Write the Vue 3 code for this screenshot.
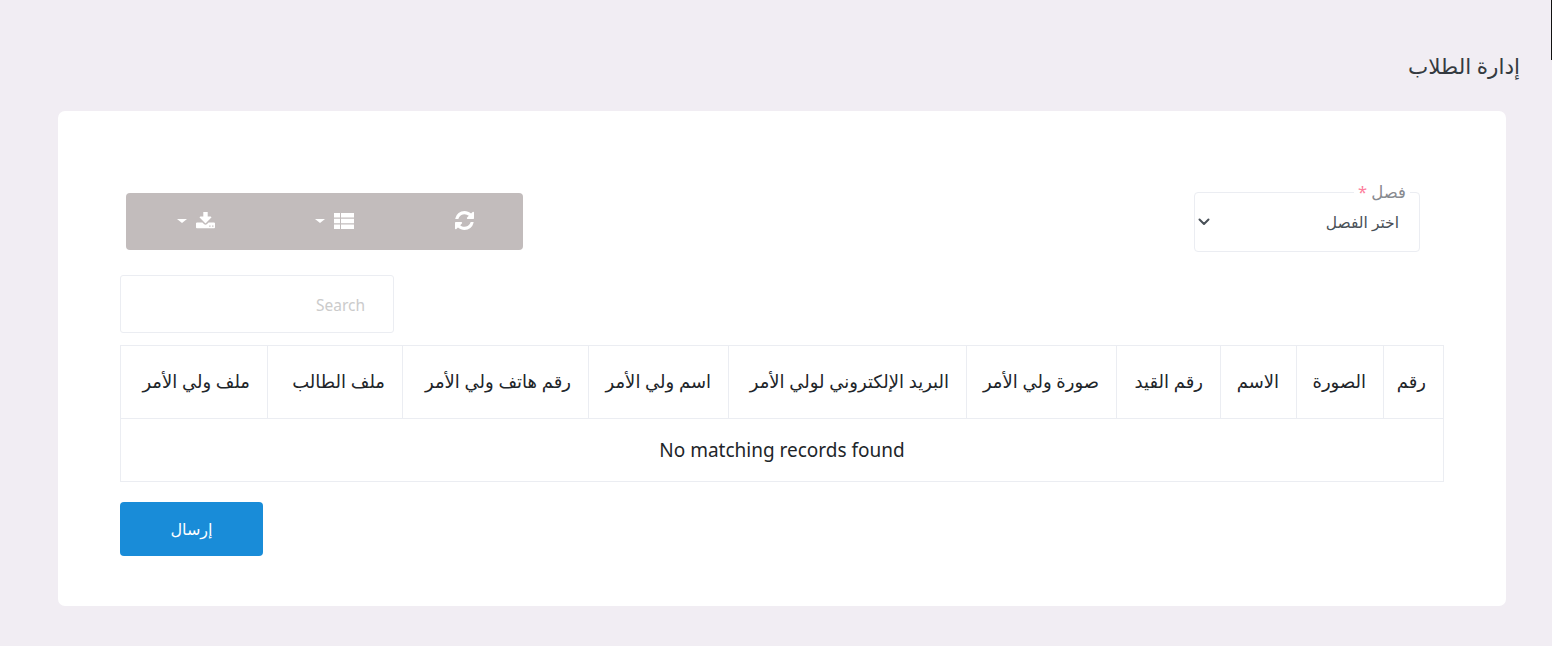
<script setup>
const columns = ['رقم', 'الصورة', 'الاسم', 'رقم القيد', 'صورة ولي الأمر', 'البريد الإلكتروني لولي الأمر', 'اسم ولي الأمر', 'رقم هاتف ولي الأمر', 'ملف الطالب', 'ملف ولي الأمر']
</script>

<template>
  <div class="page" dir="rtl">
    <i class="edge"></i>
    <h1 class="title">إدارة الطلاب</h1>
    <section class="card">
      <div class="filters">
        <div class="field">
          <span class="legend">فصل <em>*</em></span>
          <span class="value">اختر الفصل</span>
          <svg class="chevron" viewBox="0 0 12 8" width="12" height="8"><path d="M1.5 1.5 6 6l4.5-4.5" fill="none" stroke="#495057" stroke-width="2" stroke-linecap="round" stroke-linejoin="round"/></svg>
        </div>
        <div class="toolbar">
          <div class="tool tool-refresh">
            <svg viewBox="128 128 1536 1536" width="19" height="19"><path fill="#fff" d="M1639 1056q0 5-1 7-64 268-268 434.5t-478 166.5q-146 0-282.5-55t-243.5-157l-129 129q-19 19-45 19t-45-19-19-45v-448q0-26 19-45t45-19h448q26 0 45 19t19 45-19 45l-137 137q71 66 161 102t187 36q134 0 250-65t186-179q11-17 53-117 8-23 30-23h192q13 0 22.5 9.5t9.5 22.5zm25-800v448q0 26-19 45t-45 19h-448q-26 0-45-19t-19-45 19-45l138-138q-148-137-349-137-134 0-250 65t-186 179q-11 17-53 117-8 23-30 23h-199q-13 0-22.5-9.5t-9.5-22.5v-7q65-268 270-434.5t480-166.5q146 0 284 55.5t245 156.5l130-129q19-19 45-19t45 19 19 45z"/></svg>
          </div>
          <div class="tool tool-columns">
            <svg viewBox="0 0 20 16" width="20" height="16"><path fill="#fff" d="M0 0h6v4.6H0zM7 0h13v4.6H7zM0 5.7h6v4.6H0zM7 5.7h13v4.6H7zM0 11.4h6V16H0zM7 11.4h13V16H7z"/></svg>
            <i class="caret"></i>
          </div>
          <div class="tool tool-export">
            <svg viewBox="64 128 1664 1536" width="19" height="18"><path fill="#fff" d="M1344 1344q0-26-19-45t-45-19-45 19-19 45 19 45 45 19 45-19 19-45zm256 0q0-26-19-45t-45-19-45 19-19 45 19 45 45 19 45-19 19-45zm128-224v320q0 40-28 68t-68 28h-1472q-40 0-68-28t-28-68v-320q0-40 28-68t68-28h465l135 136q58 56 136 56t136-56l136-136h464q40 0 68 28t28 68zm-325-569q17 41-14 70l-448 448q-18 19-45 19t-45-19l-448-448q-31-29-14-70 17-39 59-39h256v-448q0-26 19-45t45-19h256q26 0 45 19t19 45v448h256q42 0 59 39z"/></svg>
            <i class="caret"></i>
          </div>
        </div>
      </div>

      <div class="search-row">
        <div class="search"><span>Search</span></div>
      </div>

      <table class="grid">
        <thead>
          <tr><th v-for="c in columns" :key="c">{{ c }}</th></tr>
        </thead>
        <tbody>
          <tr><td :colspan="columns.length">No matching records found</td></tr>
        </tbody>
      </table>

      <div class="actions">
        <button class="send" type="button">إرسال</button>
      </div>
    </section>
  </div>
</template>

<style>
html, body { margin: 0; background: #f1edf3; }
</style>

<style scoped>
.page {
  box-sizing: border-box;
  height: 646px;
  padding: 51px 32px 0 46px;
  background: #f1edf3;
  font-family: "Noto Sans", "DejaVu Sans", sans-serif;
  overflow: hidden;
}
.edge {
  position: absolute;
  top: 0;
  right: 0;
  width: 1px;
  height: 60px;
  background: #111;
}
.title {
  margin: 0;
  height: 60px;
  font-size: 21.5px;
  font-weight: 500;
  line-height: 30px;
  color: #343a40;
}
.card {
  box-sizing: border-box;
  margin-left: 12px;
  margin-right: 14px;
  height: 495px;
  padding: 81px 62px 0;
  background: #fff;
  border-radius: 7px;
}
.filters {
  display: flex;
  justify-content: space-between;
  align-items: flex-start;
  height: 83px;
}
.field {
  position: relative;
  box-sizing: border-box;
  display: flex;
  align-items: center;
  justify-content: space-between;
  width: 226px;
  height: 60px;
  margin-right: 24px;
  padding: 0 20px 0 3px;
  border: 1px solid #ebedf2;
  border-radius: 4px;
}
.legend {
  position: absolute;
  top: -11px;
  right: 9px;
  padding: 0 4px;
  background: #fff;
  font-size: 16.5px;
  line-height: 20px;
  color: #878a8f;
}
.legend em { font-style: normal; color: #fd7e9c; }
.value { font-size: 15.5px; color: #495057; }
.chevron { display: block; }
.toolbar {
  display: flex;
  width: 397px;
  height: 57px;
  margin: 1px 0 0 6px;
  background: #c2bcbc;
  border-radius: 4px;
}
.tool {
  box-sizing: border-box;
  display: flex;
  align-items: center;
  justify-content: center;
  gap: 9px;
  padding-bottom: 2px;
}
.tool-refresh { width: 120px; padding-left: 2px; }
.tool-columns { width: 137px; }
.tool-export { width: 140px; }
.caret {
  width: 0;
  height: 0;
  border-top: 4px solid #fff;
  border-left: 5px solid transparent;
  border-right: 5px solid transparent;
}
.search-row { display: flex; justify-content: flex-end; }
.search {
  box-sizing: border-box;
  display: flex;
  align-items: center;
  width: 274px;
  height: 58px;
  padding: 1px 28px 0;
  border: 1px solid #ebedf2;
  border-radius: 3px;
  font-size: 15.5px;
  color: #cbcbcb;
}
.grid {
  box-sizing: border-box;
  width: 1324px;
  margin-top: 12px;
  table-layout: fixed;
  border-collapse: collapse;
  color: #212529;
}
.grid th, .grid td {
  box-sizing: border-box;
  border: 1px solid #ebedf2;
  padding: 0;
  text-align: center;
}
.grid th {
  height: 73px;
  padding: 0 17px 3px 10px;
  text-align: right;
  font-size: 18px;
  font-weight: 400;
  white-space: nowrap;
}
.grid td { height: 63px; font-size: 19px; }
.grid th:nth-child(1) { width: 60px; }
.grid th:nth-child(2) { width: 87px; }
.grid th:nth-child(3) { width: 76px; }
.grid th:nth-child(4) { width: 104px; }
.grid th:nth-child(5) { width: 150px; }
.grid th:nth-child(6) { width: 238px; }
.grid th:nth-child(7) { width: 140px; }
.grid th:nth-child(8) { width: 186px; }
.grid th:nth-child(9) { width: 135px; }
.actions { display: flex; justify-content: flex-end; margin-top: 20px; }
.send {
  width: 143px;
  height: 54px;
  border: 0;
  border-radius: 4px;
  background: #198cd8;
  color: #fff;
  font-family: inherit;
  font-size: 16px;
}
</style>
